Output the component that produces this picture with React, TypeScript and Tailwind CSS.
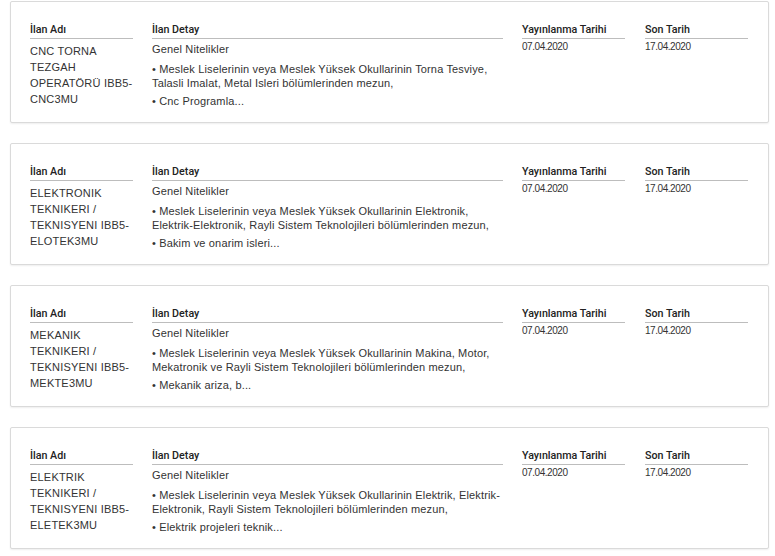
import React from "react";

type Ilan = {
	ad: string;
	satirlar: string[];
	yayin: string;
	son: string;
};

const ilanlar: Ilan[] = [
	{
		ad: "CNC TORNA TEZGAH OPERATÖRÜ IBB5-CNC3MU",
		satirlar: [
			"• Meslek Liselerinin veya Meslek Yüksek Okullarinin Torna Tesviye, Talasli Imalat, Metal Isleri bölümlerinden mezun,",
			"• Cnc Programla...",
		],
		yayin: "07.04.2020",
		son: "17.04.2020",
	},
	{
		ad: "ELEKTRONIK TEKNIKERI / TEKNISYENI IBB5-ELOTEK3MU",
		satirlar: [
			"• Meslek Liselerinin veya Meslek Yüksek Okullarinin Elektronik, Elektrik-Elektronik, Rayli Sistem Teknolojileri bölümlerinden mezun,",
			"• Bakim ve onarim isleri...",
		],
		yayin: "07.04.2020",
		son: "17.04.2020",
	},
	{
		ad: "MEKANIK TEKNIKERI / TEKNISYENI IBB5-MEKTE3MU",
		satirlar: [
			"• Meslek Liselerinin veya Meslek Yüksek Okullarinin Makina, Motor, Mekatronik ve Rayli Sistem Teknolojileri bölümlerinden mezun,",
			"• Mekanik ariza, b...",
		],
		yayin: "07.04.2020",
		son: "17.04.2020",
	},
	{
		ad: "ELEKTRIK TEKNIKERI / TEKNISYENI IBB5-ELETEK3MU",
		satirlar: [
			"• Meslek Liselerinin veya Meslek Yüksek Okullarinin Elektrik, Elektrik-Elektronik, Rayli Sistem Teknolojileri bölümlerinden mezun,",
			"• Elektrik projeleri teknik...",
		],
		yayin: "07.04.2020",
		son: "17.04.2020",
	},
];

const Baslik = ({ children }: { children: React.ReactNode }) => (
	<div className="h-[17px] border-b border-[#bdbdbd] font-['Roboto',sans-serif] font-medium text-[10.7px] leading-[16px] text-[#222]">
		{children}
	</div>
);

const IlanKart = ({ ilan }: { ilan: Ilan }) => {
	return (
		<div className="h-[122px] border border-[#dadada] rounded-[2px] bg-white shadow-[0_1px_2px_rgba(0,0,0,0.07)] pt-[20px] px-[19px] flex flex-row">
			<div className="w-[103px]">
				<Baslik>İlan Adı</Baslik>
				<div className="mt-[4px] text-[11px] leading-[16px] tracking-[0.2px] text-[#333]">
					{ilan.ad}
				</div>
			</div>
			<div className="w-[351px] ml-[19px]">
				<Baslik>İlan Detay</Baslik>
				<div className="mt-[3px] text-[11px] leading-[14px] tracking-[0.15px] text-[#333]">
					<p className="mb-[6px]">Genel Nitelikler</p>
					{ilan.satirlar.map((s, i) => (
						<p key={i} className="mb-[4px]">
							{s}
						</p>
					))}
				</div>
			</div>
			<div className="w-[103px] ml-[19px]">
				<Baslik>Yayınlanma Tarihi</Baslik>
				<div className="mt-[1px] text-[10px] leading-[14px] tracking-[-0.45px] text-[#333]">
					{ilan.yayin}
				</div>
			</div>
			<div className="w-[103px] ml-[20px]">
				<Baslik>Son Tarih</Baslik>
				<div className="mt-[1px] text-[10px] leading-[14px] tracking-[-0.45px] text-[#333]">
					{ilan.son}
				</div>
			</div>
		</div>
	);
};

export default function App() {
	return (
		<div className="w-[775px] h-[556px] bg-white overflow-hidden font-['Liberation_Sans',Arial,sans-serif]">
			<div className="pt-[1px] pl-[10px] w-[769px] flex flex-col gap-[20px]">
				{ilanlar.map((ilan) => (
					<IlanKart key={ilan.ad} ilan={ilan} />
				))}
			</div>
		</div>
	);
}
